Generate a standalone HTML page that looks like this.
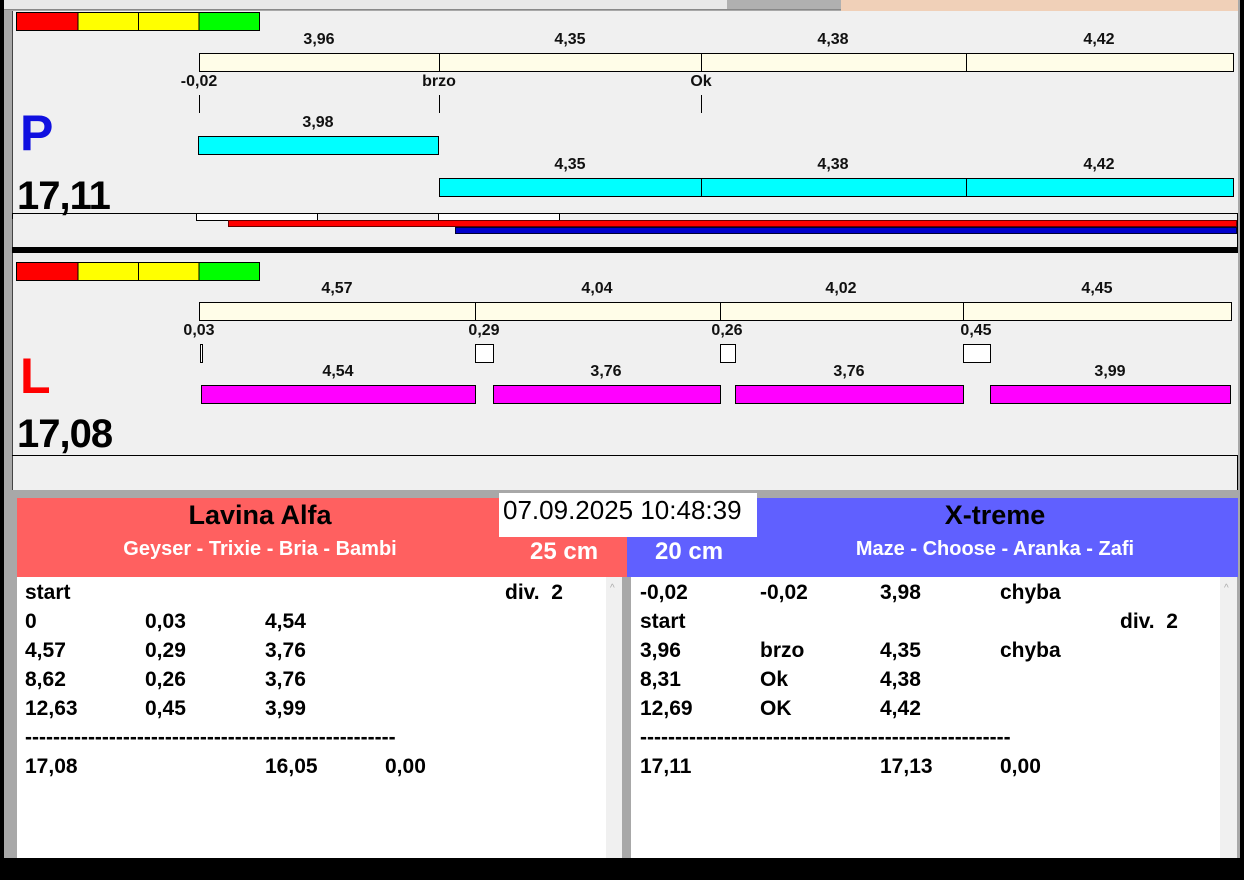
<!DOCTYPE html>
<html><head><style>
*{margin:0;padding:0;box-sizing:border-box}
body{width:1244px;height:880px;background:#000;position:relative;overflow:hidden;font-family:"Liberation Sans",Arial,sans-serif}
.a{position:absolute}
.t{position:absolute;font-weight:bold;font-size:16px;color:#111;transform:translateX(-50%);white-space:nowrap;line-height:18px}
.bx{position:absolute;border:1px solid #000}
.r{position:absolute;font-weight:bold;font-size:21px;color:#000;line-height:24px;white-space:nowrap}
</style></head><body>
<!-- frame -->
<div class="a" style="left:4px;top:0;width:1236px;height:858px;background:#a8a8a8"></div>
<div class="a" style="left:4px;top:0;width:837px;height:10px;background:#e8e8e8;border-bottom:1px solid #888"></div>
<div class="a" style="left:841px;top:0;width:397px;height:12px;background:#f0d0b8"></div>
<div class="a" style="left:727px;top:0;width:114px;height:9px;background:#b0b0b0"></div>
<!-- top panel -->
<div class="a" style="left:12px;top:11px;width:1226px;height:236px;background:#f0f0f0;border-left:1px solid #444"></div>
<div class="a" style="left:12px;top:247px;width:1226px;height:6px;background:#000"></div>
<div class="a" style="left:12px;top:253px;width:1226px;height:237px;background:#f0f0f0;border-left:1px solid #444"></div>

<!-- color bars -->
<div class="bx" style="left:16px;top:12px;width:244px;height:19px;background:linear-gradient(90deg,#f00 0 25%,#000 25% 25.4%,#ff0 25.4% 50%,#000 50% 50.4%,#ff0 50.4% 75%,#000 75% 75.4%,#0f0 75.4%)"></div>
<div class="bx" style="left:16px;top:262px;width:244px;height:19px;background:linear-gradient(90deg,#f00 0 25%,#000 25% 25.4%,#ff0 25.4% 50%,#000 50% 50.4%,#ff0 50.4% 75%,#000 75% 75.4%,#0f0 75.4%)"></div>

<!-- P section -->
<div class="bx" style="left:199px;top:53px;width:241px;height:19px;background:#fffde8"></div>
<div class="bx" style="left:439px;top:53px;width:263px;height:19px;background:#fffde8"></div>
<div class="bx" style="left:701px;top:53px;width:266px;height:19px;background:#fffde8"></div>
<div class="bx" style="left:966px;top:53px;width:268px;height:19px;background:#fffde8"></div>
<div class="t" style="left:319px;top:31px">3,96</div>
<div class="t" style="left:570px;top:31px">4,35</div>
<div class="t" style="left:833px;top:31px">4,38</div>
<div class="t" style="left:1099px;top:31px">4,42</div>
<div class="t" style="left:199px;top:73px">-0,02</div>
<div class="t" style="left:439px;top:73px">brzo</div>
<div class="t" style="left:701px;top:73px">Ok</div>
<div class="a" style="left:199px;top:95px;width:1px;height:18px;background:#000"></div>
<div class="a" style="left:439px;top:95px;width:1px;height:18px;background:#000"></div>
<div class="a" style="left:701px;top:95px;width:1px;height:18px;background:#000"></div>
<div class="a" style="left:20px;top:105px;font-size:50px;font-weight:bold;color:#1010e0;line-height:56px">P</div>
<div class="t" style="left:318px;top:114px">3,98</div>
<div class="bx" style="left:198px;top:136px;width:241px;height:19px;background:#0ff"></div>
<div class="t" style="left:570px;top:156px">4,35</div>
<div class="t" style="left:833px;top:156px">4,38</div>
<div class="t" style="left:1099px;top:156px">4,42</div>
<div class="bx" style="left:439px;top:178px;width:263px;height:19px;background:#0ff"></div>
<div class="bx" style="left:701px;top:178px;width:266px;height:19px;background:#0ff"></div>
<div class="bx" style="left:966px;top:178px;width:268px;height:19px;background:#0ff"></div>
<div class="a" style="left:17px;top:173px;font-size:40px;font-weight:bold;color:#000;line-height:46px;letter-spacing:-1px">17,11</div>
<div class="a" style="left:12px;top:213px;width:1226px;height:1px;background:#000"></div>
<div class="a" style="left:12px;top:213px;width:1px;height:6px;background:#000"></div>
<div class="a" style="left:1237px;top:213px;width:1px;height:34px;background:#000"></div>
<div class="bx" style="left:196px;top:213px;width:122px;height:8px;background:#fff"></div>
<div class="bx" style="left:438px;top:213px;width:122px;height:8px;background:#fff"></div>
<div class="a" style="left:228px;top:220px;width:1009px;height:7px;background:#f00;border:1px solid #600"></div>
<div class="a" style="left:455px;top:227px;width:782px;height:7px;background:#00c;border:1px solid #003"></div>

<!-- L section -->
<div class="bx" style="left:199px;top:302px;width:277px;height:19px;background:#fffde8"></div>
<div class="bx" style="left:475px;top:302px;width:246px;height:19px;background:#fffde8"></div>
<div class="bx" style="left:720px;top:302px;width:244px;height:19px;background:#fffde8"></div>
<div class="bx" style="left:963px;top:302px;width:269px;height:19px;background:#fffde8"></div>
<div class="t" style="left:337px;top:280px">4,57</div>
<div class="t" style="left:597px;top:280px">4,04</div>
<div class="t" style="left:841px;top:280px">4,02</div>
<div class="t" style="left:1097px;top:280px">4,45</div>
<div class="t" style="left:199px;top:322px">0,03</div>
<div class="t" style="left:484px;top:322px">0,29</div>
<div class="t" style="left:727px;top:322px">0,26</div>
<div class="t" style="left:976px;top:322px">0,45</div>
<div class="bx" style="left:200px;top:344px;width:3px;height:19px;background:#fff"></div>
<div class="bx" style="left:475px;top:344px;width:19px;height:19px;background:#fff"></div>
<div class="bx" style="left:720px;top:344px;width:16px;height:19px;background:#fff"></div>
<div class="bx" style="left:963px;top:344px;width:28px;height:19px;background:#fff"></div>
<div class="a" style="left:20px;top:348px;font-size:50px;font-weight:bold;color:#f00;line-height:56px">L</div>
<div class="t" style="left:338px;top:363px">4,54</div>
<div class="t" style="left:606px;top:363px">3,76</div>
<div class="t" style="left:849px;top:363px">3,76</div>
<div class="t" style="left:1110px;top:363px">3,99</div>
<div class="bx" style="left:201px;top:385px;width:275px;height:19px;background:#f0f"></div>
<div class="bx" style="left:493px;top:385px;width:228px;height:19px;background:#f0f"></div>
<div class="bx" style="left:735px;top:385px;width:229px;height:19px;background:#f0f"></div>
<div class="bx" style="left:990px;top:385px;width:241px;height:19px;background:#f0f"></div>
<div class="a" style="left:17px;top:411px;font-size:40px;font-weight:bold;color:#000;line-height:46px;letter-spacing:-1px">17,08</div>
<div class="a" style="left:12px;top:455px;width:1226px;height:1px;background:#000"></div>
<div class="a" style="left:1237px;top:455px;width:1px;height:35px;background:#000"></div>

<!-- bottom -->
<div class="a" style="left:17px;top:498px;width:610px;height:79px;background:#ff6060"></div>
<div class="a" style="left:627px;top:498px;width:611px;height:79px;background:#6060ff"></div>
<div class="a" style="left:499px;top:493px;width:258px;height:44px;background:#fff"></div>
<div class="a" style="left:503px;top:495px;font-size:26px;color:#000;line-height:30px">07.09.2025 10:48:39</div>
<div class="a" style="left:17px;top:499px;width:486px;text-align:center;font-size:27px;font-weight:bold;line-height:32px">Lavina Alfa</div>
<div class="a" style="left:17px;top:537px;width:486px;text-align:center;font-size:20px;font-weight:bold;color:#fff;line-height:24px">Geyser - Trixie - Bria - Bambi</div>
<div class="a" style="left:530px;top:538px;font-size:24px;font-weight:bold;color:#fff;line-height:28px">25 cm</div>
<div class="a" style="left:655px;top:538px;font-size:24px;font-weight:bold;color:#fff;line-height:28px">20 cm</div>
<div class="a" style="left:757px;top:499px;width:476px;text-align:center;font-size:27px;font-weight:bold;line-height:32px">X-treme</div>
<div class="a" style="left:757px;top:537px;width:476px;text-align:center;font-size:20px;font-weight:bold;color:#fff;line-height:24px">Maze - Choose - Aranka - Zafi</div>

<div class="a" style="left:17px;top:577px;width:589px;height:281px;background:#fff"></div>
<div class="a" style="left:606px;top:577px;width:16px;height:281px;background:#f0f0f0"></div>
<div class="a" style="left:610px;top:583px;font-size:10px;color:#aaa">^</div>
<div class="a" style="left:631px;top:577px;width:589px;height:281px;background:#fff"></div>
<div class="a" style="left:1220px;top:577px;width:17px;height:281px;background:#f0f0f0"></div>
<div class="a" style="left:1224px;top:583px;font-size:10px;color:#aaa">^</div>

<div class="r" style="left:25px;top:581px">start</div><div class="r" style="left:505px;top:581px">div.&nbsp; 2</div>
<div class="r" style="left:25px;top:610px">0</div><div class="r" style="left:145px;top:610px">0,03</div><div class="r" style="left:265px;top:610px">4,54</div>
<div class="r" style="left:25px;top:639px">4,57</div><div class="r" style="left:145px;top:639px">0,29</div><div class="r" style="left:265px;top:639px">3,76</div>
<div class="r" style="left:25px;top:668px">8,62</div><div class="r" style="left:145px;top:668px">0,26</div><div class="r" style="left:265px;top:668px">3,76</div>
<div class="r" style="left:25px;top:697px">12,63</div><div class="r" style="left:145px;top:697px">0,45</div><div class="r" style="left:265px;top:697px">3,99</div>
<div class="r" style="left:25px;top:726px">-----------------------------------------------------</div>
<div class="r" style="left:25px;top:755px">17,08</div><div class="r" style="left:265px;top:755px">16,05</div><div class="r" style="left:385px;top:755px">0,00</div>

<div class="r" style="left:640px;top:581px">-0,02</div><div class="r" style="left:760px;top:581px">-0,02</div><div class="r" style="left:880px;top:581px">3,98</div><div class="r" style="left:1000px;top:581px">chyba</div>
<div class="r" style="left:640px;top:610px">start</div><div class="r" style="left:1120px;top:610px">div.&nbsp; 2</div>
<div class="r" style="left:640px;top:639px">3,96</div><div class="r" style="left:760px;top:639px">brzo</div><div class="r" style="left:880px;top:639px">4,35</div><div class="r" style="left:1000px;top:639px">chyba</div>
<div class="r" style="left:640px;top:668px">8,31</div><div class="r" style="left:760px;top:668px">Ok</div><div class="r" style="left:880px;top:668px">4,38</div>
<div class="r" style="left:640px;top:697px">12,69</div><div class="r" style="left:760px;top:697px">OK</div><div class="r" style="left:880px;top:697px">4,42</div>
<div class="r" style="left:640px;top:726px">-----------------------------------------------------</div>
<div class="r" style="left:640px;top:755px">17,11</div><div class="r" style="left:880px;top:755px">17,13</div><div class="r" style="left:1000px;top:755px">0,00</div>
</body></html>
